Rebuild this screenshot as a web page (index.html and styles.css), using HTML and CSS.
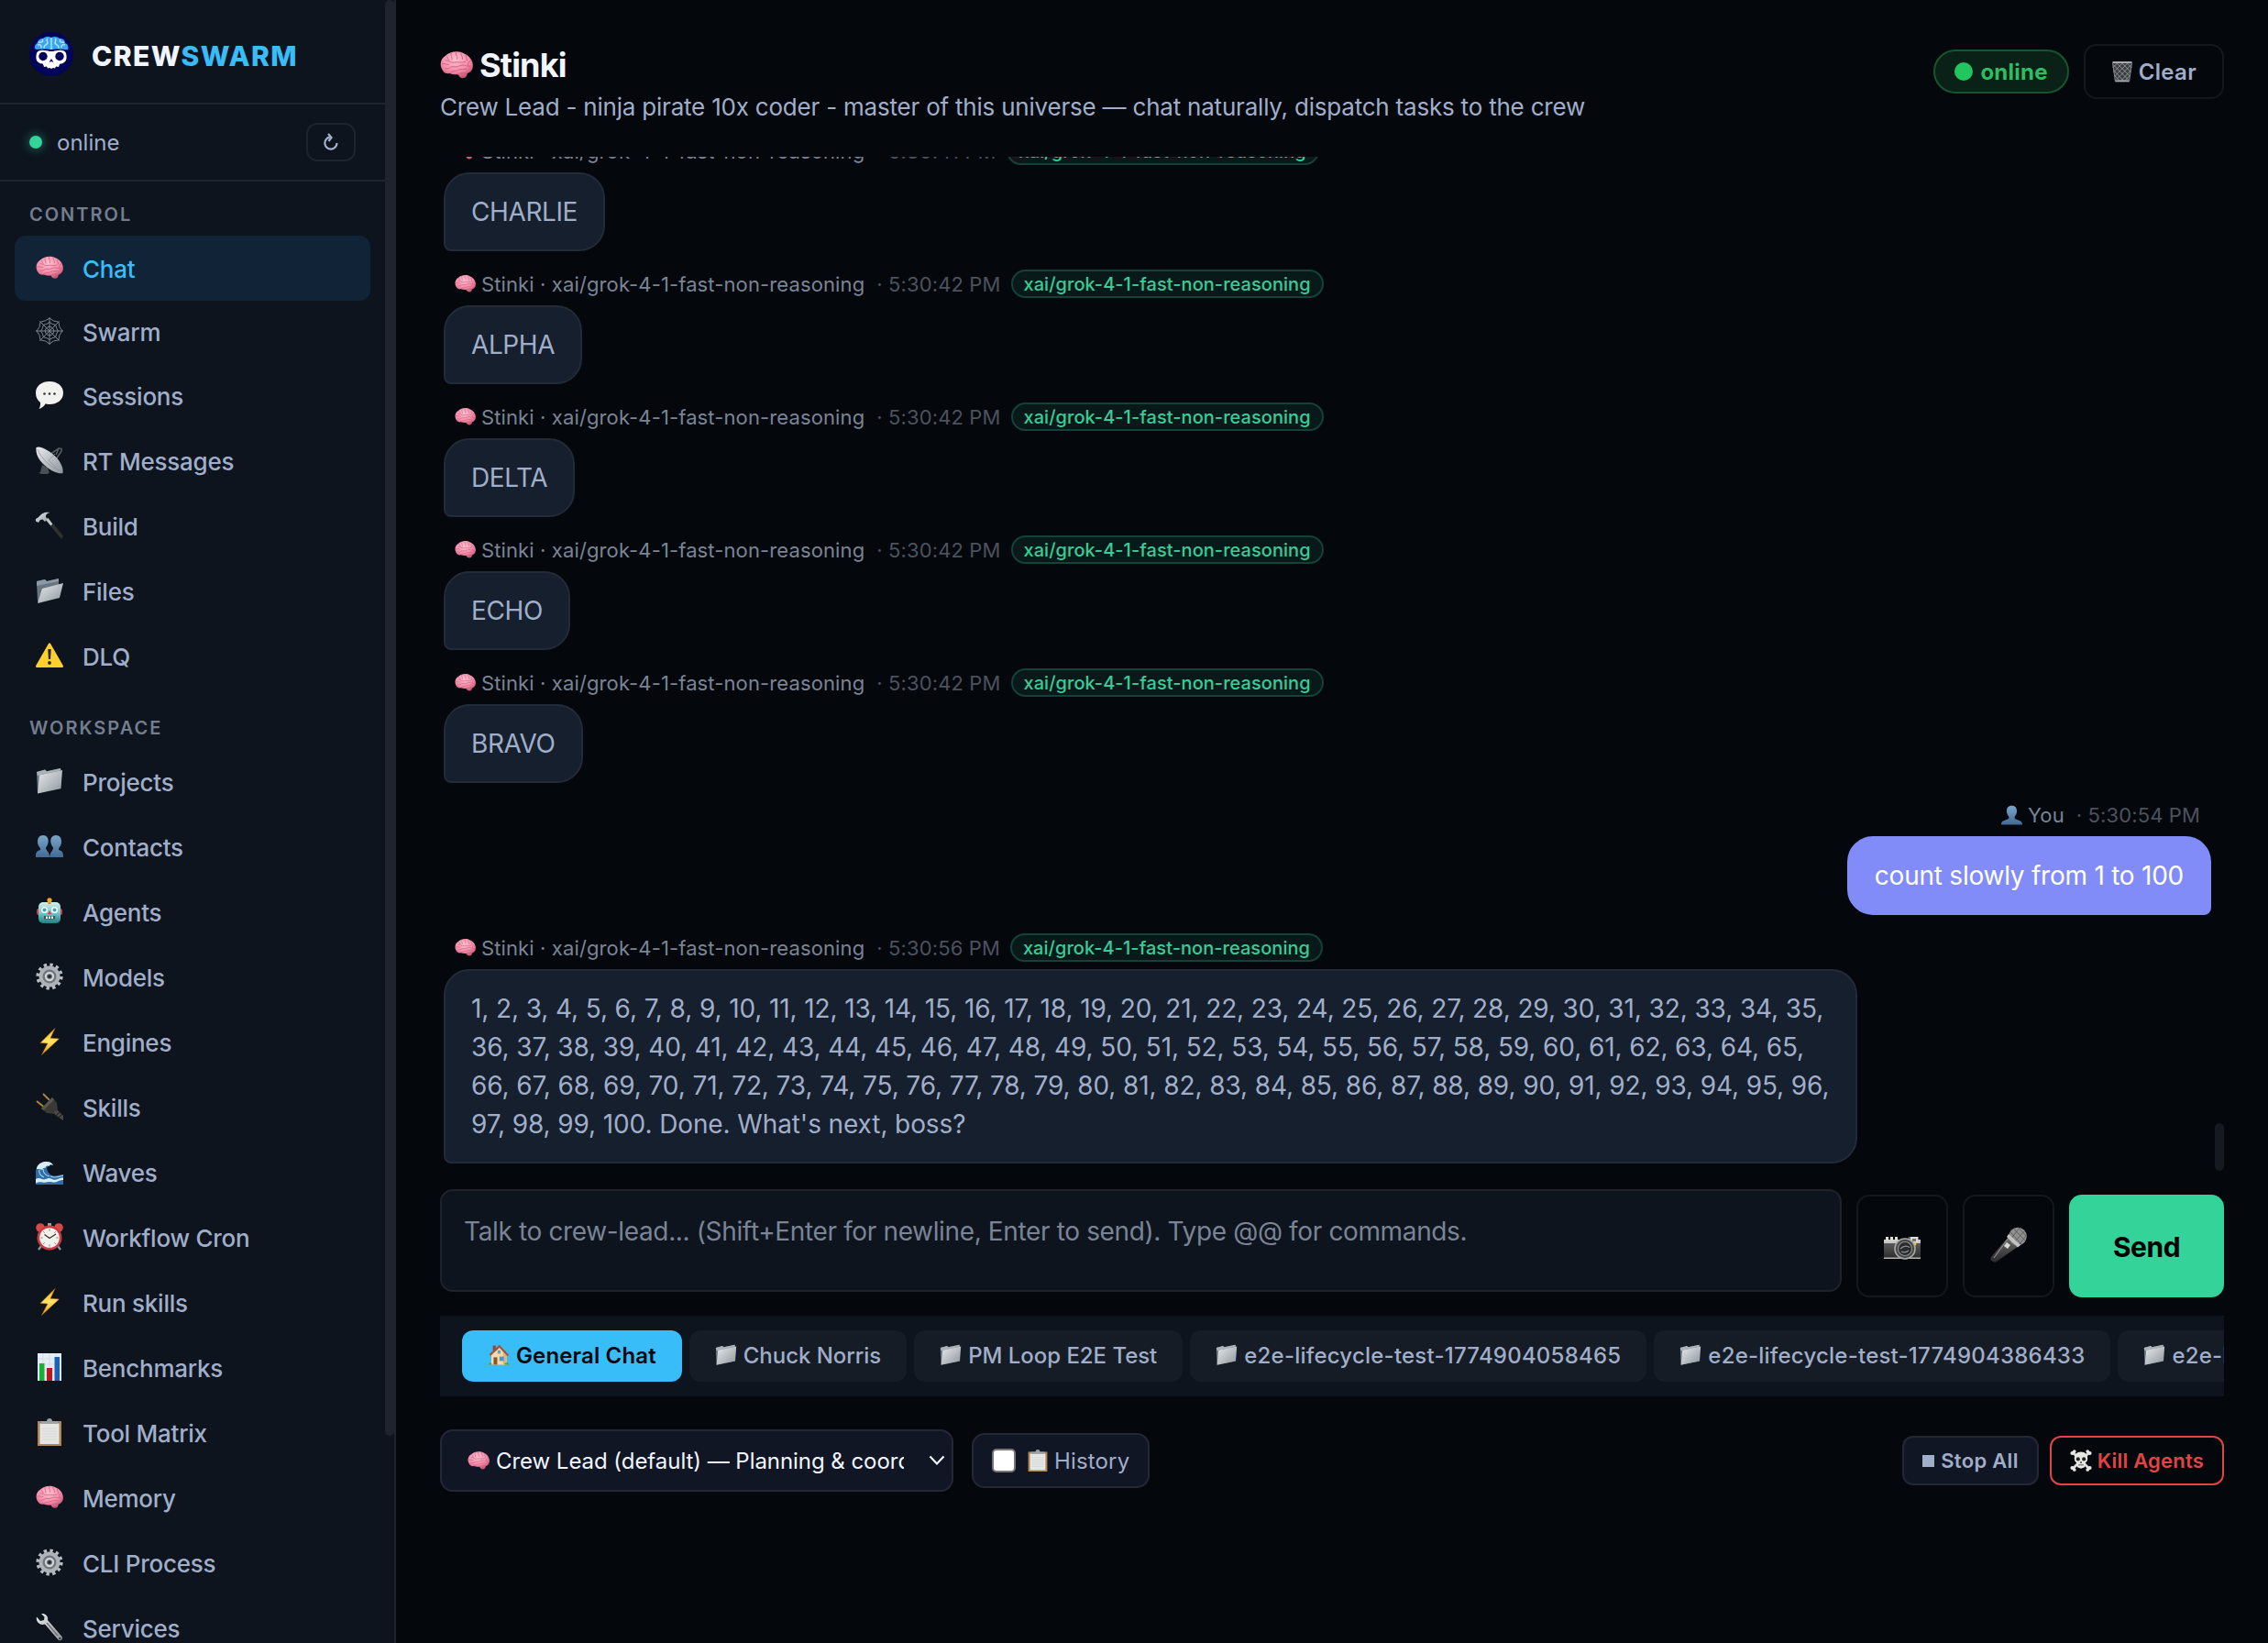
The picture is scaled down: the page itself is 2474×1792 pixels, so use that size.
FILE: index.html
```html
<!DOCTYPE html>
<html lang="en">
<head>
    <meta charset="UTF-8">
    <meta name="viewport" content="width=device-width, initial-scale=1.0">
    <title>crewswarm</title>
    <link rel="stylesheet" href="styles.css">
</head>
<body>
    <!-- icon sprite -->
    <svg class="sprite" width="0" height="0" aria-hidden="true">
        <defs>
            <radialGradient id="gPink" cx=".45" cy=".3" r=".75"><stop offset="0" stop-color="#ffc0d0"/><stop offset=".6" stop-color="#f58aa8"/><stop offset="1" stop-color="#b84a66"/></radialGradient>
            <linearGradient id="gSilver" x1="0" y1="0" x2="1" y2="1"><stop offset="0" stop-color="#e8ebee"/><stop offset="1" stop-color="#8d959c"/></linearGradient>
            <linearGradient id="gBlue" x1="0" y1="0" x2="0" y2="1"><stop offset="0" stop-color="#7ba6ca"/><stop offset="1" stop-color="#426a94"/></linearGradient>
            <linearGradient id="gBolt" x1="0" y1="0" x2="0" y2="1"><stop offset="0" stop-color="#ffb515"/><stop offset=".5" stop-color="#ffe36b"/><stop offset="1" stop-color="#f09a05"/></linearGradient>
            <linearGradient id="gRobot" x1="0" y1="0" x2="0" y2="1"><stop offset="0" stop-color="#d3f1ef"/><stop offset=".5" stop-color="#7cc5c8"/><stop offset="1" stop-color="#1f8189"/></linearGradient>
            <linearGradient id="gDark" x1="0" y1="0" x2="0" y2="1"><stop offset="0" stop-color="#6d6d6d"/><stop offset="1" stop-color="#2a2a2a"/></linearGradient>

            <symbol id="brain" viewBox="0 0 30 30">
                <path d="M2.500 20C-1 15 .5 9 5 6.500 9 2.500 17 1.500 22 4.500c5 2 8.500 7 7.800 12-.3 4-3 5.500-5.300 6.200.4 2-1 4-3.200 4.100-2.500.3-4.300-1.300-4.600-3.300-3.200.4-6-.1-8-.9-2.600.6-5-.5-6.200-2.600z" fill="url(#gPink)"/>
                <path d="M2 14c3-1 4 1 6 .5M6 7c1.500 1 1 3 2.500 4M10 4.500c-1 2 1.500 3 1 5.500M14.500 3.500c-1 2.500 2 3.500 1 6M19 4c-.5 2 2 3 1.500 5.500M23.500 6c-.5 2 1.500 3 1 5M28 11c-2 .5-3 2-2.500 4M5 18c3 1.500 4.500-2.500 8-1.500 3.500.8 5-2 8.500-1.500 2 .2 3.500 1.500 6 1M9 22c2-2.500 5-1 7.500-2.500 2.500-1.200 5-.5 7.500-1M16.500 23.500c2-1.500 5-1.500 8-1M5 10.500c3 0 4 3 8 2 3-.8 6 1 10-.5" fill="none" stroke="#c25f7d" stroke-width=".7" stroke-linecap="round"/>
            </symbol>
            <symbol id="web" viewBox="0 0 30 30">
                <g fill="none" stroke="#7c848d" stroke-width="1">
                    <path d="M15 0v30M0 15h30M4.400 4.400l21.200 21.200M25.600 4.400L4.400 25.600"/>
                    <path d="M15 1q-4 3.500-9.900 4.100Q5 11 1 15q4 4 4.100 9.900Q11 25 15 29q4-4 9.900-4.100Q25 19 29 15q-4-4-4.100-9.900Q19 5 15 1z"/>
                    <path d="M15 5.500q-3 2.500-6.700 2.800Q8 12 5.500 15 8 18 8.300 21.700 12 22 15 24.500q3-2.500 6.700-2.800Q22 18 24.500 15 22 12 21.700 8.300 18 8 15 5.500zM15 10l-3.500 1.500L10 15l1.500 3.500L15 20l3.500-1.500L20 15l-1.500-3.500z"/>
                </g>
            </symbol>
            <symbol id="speech" viewBox="0 0 30 30">
                <path d="M15 0c8.300 0 15 4.800 15 12.500S23.300 25 15 25c-2 0-3-.1-4.500-.4C9 27.500 6 29.500 3.500 30c1-1.500 1.800-4.500 1.500-7C2 20.500 0 17.500 0 12.500 0 4.800 6.700 0 15 0z" fill="#f1f1ef"/>
                <circle cx="9.500" cy="13.500" r="1.300" fill="#333"/><circle cx="15" cy="13.500" r="1.300" fill="#333"/><circle cx="20.500" cy="13.500" r="1.300" fill="#333"/>
            </symbol>
            <symbol id="dish" viewBox="0 0 30 30">
                <path d="M5 28l2-8 6 3 2 6c-3 1.500-8 1.500-12 0z" fill="#4a5055"/>
                <path d="M15 9l10-7 3 .5L28 5l-6 9M25 2l-3 7" fill="none" stroke="#565b5f" stroke-width="1.600"/>
                <path d="M.5 1c-1 8 4 16 11 21 7 6 14 8 18 7 1-6-3-14-10-20C12 3 5-1 .5 1z" fill="url(#gSilver)"/>
                <path d="M14 15l7-7M14 15l8 8M2 3c4 10 14 20 26 24" fill="none" stroke="#8a9299" stroke-width=".7"/>
            </symbol>
            <symbol id="hammer" viewBox="0 0 30 30">
                <path d="M11 9l2.500-2 6 8-2 2z" fill="#c3c8cc"/><path d="M16 15.500l3-2.500L30 26.500 28 30z" fill="#2e3032"/>
                <path d="M0 8l2.500-1.500L6 3c3-2.300 6-2.500 9.500-2C12 2 10.500 3.500 11 6l2 2-3 3-2.500-2.500-2.500.5-2 3L0 10.500z" fill="url(#gSilver)"/>
            </symbol>
            <symbol id="openfolder" viewBox="0 0 30 30">
                <path d="M1 5l9-2 2 2 13-3v17L2 27z" fill="#68757e"/><path d="M1 5l9-2 2 2 13-3v3L1 10z" fill="#8c9aa4"/>
                <path d="M7 13l23-6-4 16L2 29z" fill="url(#gSilver)"/>
            </symbol>
            <symbol id="folder" viewBox="0 0 30 30">
                <path d="M1 5l9-2.500 2 1.700L27 1v22L2 28z" fill="#6f7a82"/><path d="M1 5l9-2.500 2 1.700L27 1l.5 2L2 9z" fill="#aab3b9"/>
                <path d="M4 8.500L29 3l-1.500 20L2 28.500z" fill="url(#gSilver)"/>
            </symbol>
            <symbol id="warn" viewBox="0 0 30 30">
                <path d="M15 1.500c.8 0 1.200.6 1.500 1.200l13.200 23c.6 1.200.1 2.300-1.200 2.300H1.500c-1.300 0-1.800-1.100-1.200-2.300l13.200-23c.3-.6.700-1.200 1.500-1.200z" fill="#fdd02c"/>
                <path d="M13.300 8h3.400l-.6 11h-2.200z" fill="#2b2620"/><circle cx="15" cy="23" r="1.900" fill="#2b2620"/>
            </symbol>
            <symbol id="people" viewBox="0 0 30 30">
                <path d="M8 3c4 0 6 3 5.700 7-.3 3-1.500 5-2.700 6.500 0 3.500 4 4 4 10.500H0c0-5 .5-6.500 5-8 0-1 0-1.800-.5-2.500C3 15 2 13 2 10 2 6 4 3 8 3z" fill="url(#gBlue)"/>
                <path d="M22 3c-4 0-6 3-5.700 7 .3 3 1.500 5 2.700 6.500 0 3.500-3 4-4 10.500h15c0-5-.5-6.500-5-8 0-1 0-1.800.5-2.500C27 15 28 13 28 10c0-4-2-7-6-7z" fill="url(#gBlue)"/>
            </symbol>
            <symbol id="person" viewBox="0 0 30 30">
                <path d="M15 1c5 0 7.500 3.500 7.200 8.500-.2 3.500-1.700 5.500-3.200 7.500 0 2 .3 2.700 1.500 3.200C26 22 30 22.500 30 28H0c0-5.500 4-6 9.500-7.800 1.200-.5 1.500-1.200 1.500-3.200-1.500-2-3-4-3.200-7.500C7.500 4.500 10 1 15 1z" fill="url(#gBlue)"/>
            </symbol>
            <symbol id="robot" viewBox="0 0 30 30">
                <rect x="1" y="12" width="28" height="7" rx="2" fill="#c1444a"/><rect x="3" y="5" width="24" height="23" rx="5" fill="url(#gRobot)"/>
                <path d="M13.500 4h3v3h-3z" fill="#c98317"/><circle cx="15" cy="2.800" r="2.600" fill="#f2a62b"/>
                <circle cx="9.500" cy="13.500" r="3.600" fill="#fff"/><circle cx="20.500" cy="13.500" r="3.600" fill="#fff"/>
                <circle cx="9.500" cy="13.500" r="2" fill="#35a7bd"/><circle cx="20.500" cy="13.500" r="2" fill="#35a7bd"/>
                <path d="M15 14l2 4h-4z" fill="#d6403d"/><path d="M9 20h12v3.500H9z" fill="#31565a"/><path d="M11 20.500h2v2.500h-2zM14 20.500h2v2.500h-2zM17 20.500h2v2.500h-2z" fill="#fff"/>
            </symbol>
            <symbol id="gear" viewBox="0 0 30 30">
                <circle cx="15" cy="15" r="12.800" fill="none" stroke="#b9bdc2" stroke-width="3.600" stroke-dasharray="3.350 3.350"/>
                <circle cx="15" cy="15" r="9.500" fill="#70757a" stroke="#aeb3b8" stroke-width="4"/>
                <circle cx="15" cy="15" r="4" fill="#51565b" stroke="#cfd3d7" stroke-width="2.400"/><circle cx="15" cy="15" r="1.600" fill="#1b2027"/>
            </symbol>
            <symbol id="bolt" viewBox="0 0 30 30"><path d="M21 .5L5 16.500l8 .5L6.500 29.500 25.500 12l-9.500-.8z" fill="url(#gBolt)" stroke="#b46f06" stroke-width=".5"/></symbol>
            <symbol id="plug" viewBox="0 0 30 30">
                <path d="M1 9l7.500 6M8 1l7 7" stroke="#b08a3a" stroke-width="1.800"/>
                <path d="M6 17L18 5l5 6 1 9-3 3-9-1z" fill="#3b3936"/><path d="M6 17L18 5l2 2.500L8.500 19z" fill="#5a5751"/>
                <path d="M20 20l4-1 6 6v5l-3-2-6-4z" fill="#4a4846"/><path d="M22 25l4-4M25 27l4-4" stroke="#171717"/>
            </symbol>
            <symbol id="wave" viewBox="0 0 30 30">
                <path d="M0 14C1 8 6 4 12 4c3 0 6 1.500 7 4-2-1-4-.5-4.500 1-2 0-3 2-2 4 1 4 5 7 9 6.500 4-.5 6-1.500 8.500-1.500v11H0z" fill="#2d6ea6"/>
                <path d="M1 11c1-4 5-7 11-7 3 0 6 1.500 7 4-2-1.300-4-.5-4.500 1-2-1-4 0-4 2-2-.5-3 .5-3 2-2-.8-4-.8-6.500-1zM0 23c5-3 7 2 11 0s5-1 8 .5 6-2 11-2v2.500c-5 0-7 3-11 2.500s-5-1-8 0-6-2-11 1z" fill="#d9edf5"/>
                <path d="M4 13c-1 4 2 7 5 8M8 12c0 4 3 7 7 8M16 20c4 2 9 1 14-1" fill="none" stroke="#a9d4ea" stroke-width="1.100"/>
            </symbol>
            <symbol id="clock" viewBox="0 0 30 30">
                <path d="M6 25l-3 4M24 25l3 4" stroke="#8e969c" stroke-width="2.200"/><circle cx="5" cy="5" r="4.800" fill="#d6484a"/><circle cx="25" cy="5" r="4.800" fill="#d6484a"/><path d="M13 0h4v4h-4z" fill="#9aa1a6"/>
                <circle cx="15" cy="16" r="13.500" fill="#c93d3f"/><circle cx="15" cy="16" r="10.800" fill="#f4f1ec"/>
                <path d="M15 6.500v2M15 23.500v2M5.500 16h2M22.500 16h2M8.300 9.300l1.300 1.300M21.700 9.300l-1.300 1.300M8.300 22.700l1.300-1.300M21.700 22.700l-1.300-1.300" stroke="#777"/><path d="M9.500 12.500l5.500 4 7-4.500" fill="none" stroke="#333" stroke-width="1.300"/>
            </symbol>
            <symbol id="chart" viewBox="0 0 30 30">
                <path d="M2 0h26v30H2z" fill="#e3edf3"/><path d="M2 6h26M2 12h26M2 18h26M2 24h26M8 0v30M15 0v30M22 0v30" stroke="#c3d3df" stroke-width=".5"/>
                <path d="M4 11h5.500v19H4z" fill="#15b03a"/><path d="M12 16h6v14h-6z" fill="#c3161c"/><path d="M20.500 4H26v26h-5.500z" fill="#1a61b8"/>
            </symbol>
            <symbol id="clip" viewBox="0 0 30 30">
                <path d="M2 3h26v27H2z" fill="#ad8754"/><path d="M4.500 5.500h21V28h-21z" fill="#e6e6e6"/><path d="M7 11h16M7 14h16M7 17h16M7 20h16M7 23h16" stroke="#d2d2d2" stroke-width=".8"/>
                <path d="M6 3h6c0-4 6-4 6 0h6v3H6z" fill="#9ea3a7"/>
            </symbol>
            <symbol id="wrench" viewBox="0 0 30 30">
                <path d="M1 3.500L5 8l4-1 .5-3.500L6 0c4-.8 8 2.500 7 7l15.500 18c1.500 3-1.500 5.500-4 3.500L10 11.500C5 13.500-.5 9 1 3.500z" fill="url(#gSilver)"/><path d="M12 10l12 14" stroke="#716f70" stroke-width="1.400"/><circle cx="26.300" cy="27" r="1.200" fill="#3b3331"/>
            </symbol>
            <symbol id="house" viewBox="0 0 30 30">
                <path d="M5 13L16 3l10 11v14H5z" fill="#f4dba8"/><path d="M16 3l10 11v14h-5V9z" fill="#dcb67c"/>
                <path d="M7 2h4v7H7z" fill="#8e4b36"/><path d="M2 14L16 1l13 14-2 1.500L16 5 4 16z" fill="#a8503a"/>
                <path d="M8 18h5v10H8z" fill="#8c5431"/><path d="M16 17h6v6h-6z" fill="#4d94c9"/><path d="M13.500 8.500h4V13h-4z" fill="#5aa2d2"/><path d="M1 28c0-3 4-4 5 0zM23 28c0-4 6-4 6 0z" fill="#5da345"/>
            </symbol>
            <symbol id="trash" viewBox="0 0 30 30">
                <path d="M1 2h28l-4 27H5z" fill="#3b3f43"/>
                <path d="M3 6l20 20M8 4l17 17M15 4l12 12M22 4l6 6M27 6L7 26M22 4L5 21M15 4L3 16M8 4L2 10M3 13l14 15M27 13L13 28M4 20l9 9M26 20l-9 9" stroke="#a6abb0" stroke-width=".9"/>
                <path d="M2 2.500h26M5.500 28h19" stroke="#a4a9ad" stroke-width="2.200"/><path d="M2 3l3.500 25M28 3l-3.500 25" stroke="#8b9095"/>
            </symbol>
            <symbol id="camera" viewBox="0 0 40 40">
                <path d="M0 10h26l1-4h11v5h2v19H0z" fill="url(#gDark)"/><path d="M0 9h40v4H0z" fill="#c9c9c6"/><path d="M2 6h3v4H2zM7 6h3v4H7zM12 6h3v4h-3zM29 6h8v6h-8z" fill="#deded9"/><path d="M31 8h4v3h-4z" fill="#777"/>
                <path d="M0 28.500h40V30H0z" fill="#b4b4b1"/><circle cx="23" cy="19" r="11" fill="#494949" stroke="#a8a8a6" stroke-width="1.600"/><circle cx="23" cy="19" r="7.500" fill="#292b2c" stroke="#8d8d8b" stroke-width="1.200"/><path d="M18 19q5-5 10-1.500M19 22q4 2 8-1" fill="none" stroke="#8d9294" stroke-width="1.300"/><circle cx="34" cy="14" r="1.400" fill="#e8bd3c"/>
            </symbol>
            <symbol id="mic" viewBox="0 0 40 40">
                <path d="M21 10l10 11L7 38c-3 2-8-1-6-5z" fill="url(#gDark)"/><path d="M20.500 11.500L4 34" stroke="#8b8b8b" stroke-width="1.200"/>
                <circle cx="30" cy="10.500" r="9.800" fill="#8f8f8f"/><path d="M22 6l12 13M26 2.500L38 15M31 1l8 9M22 14l10-13M25 18L38 4M31 20l8-10" stroke="#555" stroke-width=".8"/>
                <path d="M20 8l13 12-3 2.500L18 11z" fill="#c2c2c2"/><path d="M18 17l4 3-3 4-4-3z" fill="#d9d9d9"/>
            </symbol>
            <symbol id="skull" viewBox="0 0 30 30">
                <path d="M4 4l22 22M26 4L4 26" stroke="#dcdcda" stroke-width="3.500" stroke-linecap="round"/><g fill="#e7e7e4"><circle cx="3" cy="5" r="2.500"/><circle cx="6" cy="2.500" r="2.300"/><circle cx="27" cy="5" r="2.500"/><circle cx="24" cy="2.500" r="2.300"/><circle cx="3" cy="25" r="2.500"/><circle cx="6" cy="27.500" r="2.300"/><circle cx="27" cy="25" r="2.500"/><circle cx="24" cy="27.500" r="2.300"/>
                <path d="M15 3c6 0 9 4 9 9 0 3-1 5-3 6l-1 6-5 2-5-2-1-6c-2-1-3-3-3-6 0-5 3-9 9-9z"/></g>
                <circle cx="11" cy="13" r="2.600" fill="#222"/><circle cx="19" cy="13" r="2.600" fill="#222"/><path d="M15 15.500l1.500 3h-3zM11.500 20.500h7v1h-7z" fill="#222"/>
            </symbol>
        </defs>
    </svg>

    <div class="app">
        <aside class="sidebar">
            <div class="brand">
                <svg class="logo" viewBox="0 0 48 48">
                    <circle cx="24" cy="24" r="24" fill="#02055a"/>
                    <path d="M6 18c-1-4 2-5 3-7 1-4 5-4 6-4 3-3 7-2 9-1 3-2 7-1 9 1 3 0 6 1 6 5 3 1 4 4 3 7-3 1-5-1-7 0-5-1-8 0-11 0s-7-1-11 0c-3-1-5 1-7-1z" fill="#3ba5f4"/>
                    <path d="M24 6v13M20 7c-3 2 2 3-1 6s-3 1-3 5M28 7c3 2-2 3 1 6s3 1 3 5M14 8c2 2-1 4-4 3M34 8c-2 2 1 4 4 3M9 14c3-1 4 0 4 3M39 14c-3-1-4 0-4 3" fill="none" stroke="#b9e8ff" stroke-width="1.400"/>
                    <path d="M8 23c1-3 5-3.500 8-3 3-.5 5 1 8 1s5-1.500 8-1c3-.5 7 0 8 3 1 4 1 8-2 10-2 2-4 1-5 2l-1 3-3-.5-1 2-2-.5-2 1-2-1-2 .5-1-2-3 .5-1-3c-1-1-3 0-5-2-3-2-3-6-2-10z" fill="#fff"/>
                    <circle cx="15" cy="26.500" r="4.700" fill="#02055a"/><circle cx="33" cy="26.500" r="4.700" fill="#02055a"/><path d="M24 29l2.500 4-2.500-1-2.500 1z" fill="#02055a"/>
                </svg>
                <div class="brand-name">CREW<span>SWARM</span></div>
            </div>
            <div class="status-row">
                <span class="status-dot"></span>
                <span class="status-text">online</span>
                <button class="refresh">
                    <svg viewBox="0 0 18 20"><path d="M7.500 4.600a6.600 6.600 0 1 0 8 6.500M6 1l3.500 4L6.500 9" fill="none" stroke="#a3b1cc" stroke-width="2.200"/></svg>
                </button>
            </div>
            <nav class="nav">
                <div class="nav-label">CONTROL</div>
                <a class="nav-item active"><svg><use href="#brain"/></svg>Chat</a>
                <a class="nav-item short"><svg><use href="#web"/></svg>Swarm</a>
                <a class="nav-item"><svg><use href="#speech"/></svg>Sessions</a>
                <a class="nav-item"><svg><use href="#dish"/></svg>RT Messages</a>
                <a class="nav-item"><svg><use href="#hammer"/></svg>Build</a>
                <a class="nav-item"><svg><use href="#openfolder"/></svg>Files</a>
                <a class="nav-item"><svg><use href="#warn"/></svg>DLQ</a>
                <div class="nav-label workspace">WORKSPACE</div>
                <a class="nav-item"><svg><use href="#folder"/></svg>Projects</a>
                <a class="nav-item"><svg><use href="#people"/></svg>Contacts</a>
                <a class="nav-item"><svg><use href="#robot"/></svg>Agents</a>
                <a class="nav-item"><svg><use href="#gear"/></svg>Models</a>
                <a class="nav-item"><svg><use href="#bolt"/></svg>Engines</a>
                <a class="nav-item"><svg><use href="#plug"/></svg>Skills</a>
                <a class="nav-item"><svg><use href="#wave"/></svg>Waves</a>
                <a class="nav-item"><svg><use href="#clock"/></svg>Workflow Cron</a>
                <a class="nav-item"><svg><use href="#bolt"/></svg>Run skills</a>
                <a class="nav-item"><svg><use href="#chart"/></svg>Benchmarks</a>
                <a class="nav-item"><svg><use href="#clip"/></svg>Tool Matrix</a>
                <a class="nav-item"><svg><use href="#brain"/></svg>Memory</a>
                <a class="nav-item"><svg><use href="#gear"/></svg>CLI Process</a>
                <a class="nav-item"><svg><use href="#wrench"/></svg>Services</a>
            </nav>
            <div class="sidebar-thumb"></div>
        </aside>

        <main class="main">
            <header class="page-header">
                <div>
                    <h1 class="title"><svg><use href="#brain"/></svg>Stinki</h1>
                    <p class="subtitle">Crew Lead - ninja pirate 10x coder - master of this universe — chat naturally, dispatch tasks to the crew</p>
                </div>
                <div class="header-actions">
                    <span class="badge"><i></i>online</span>
                    <button class="clear-btn"><svg><use href="#trash"/></svg>Clear</button>
                </div>
            </header>

            <section class="messages">
                <div class="msg">
                    <div class="meta"><svg><use href="#brain"/></svg><span class="who">Stinki · xai/grok-4-1-fast-non-reasoning</span><span class="time">· 5:30:41 PM</span><span class="chip">xai/grok-4-1-fast-non-reasoning</span></div>
                    <div class="bubble">CHARLIE</div>
                </div>
                <div class="msg">
                    <div class="meta"><svg><use href="#brain"/></svg><span class="who">Stinki · xai/grok-4-1-fast-non-reasoning</span><span class="time">· 5:30:42 PM</span><span class="chip">xai/grok-4-1-fast-non-reasoning</span></div>
                    <div class="bubble">ALPHA</div>
                </div>
                <div class="msg">
                    <div class="meta"><svg><use href="#brain"/></svg><span class="who">Stinki · xai/grok-4-1-fast-non-reasoning</span><span class="time">· 5:30:42 PM</span><span class="chip">xai/grok-4-1-fast-non-reasoning</span></div>
                    <div class="bubble">DELTA</div>
                </div>
                <div class="msg">
                    <div class="meta"><svg><use href="#brain"/></svg><span class="who">Stinki · xai/grok-4-1-fast-non-reasoning</span><span class="time">· 5:30:42 PM</span><span class="chip">xai/grok-4-1-fast-non-reasoning</span></div>
                    <div class="bubble">ECHO</div>
                </div>
                <div class="msg">
                    <div class="meta"><svg><use href="#brain"/></svg><span class="who">Stinki · xai/grok-4-1-fast-non-reasoning</span><span class="time">· 5:30:42 PM</span><span class="chip">xai/grok-4-1-fast-non-reasoning</span></div>
                    <div class="bubble">BRAVO</div>
                </div>
                <div class="msg user">
                    <div class="meta"><svg><use href="#person"/></svg><span class="who">You</span><span class="time">· 5:30:54 PM</span></div>
                    <div class="bubble">count slowly from 1 to 100</div>
                </div>
                <div class="msg">
                    <div class="meta"><svg><use href="#brain"/></svg><span class="who">Stinki · xai/grok-4-1-fast-non-reasoning</span><span class="time">· 5:30:56 PM</span><span class="chip">xai/grok-4-1-fast-non-reasoning</span></div>
                    <div class="bubble long">1, 2, 3, 4, 5, 6, 7, 8, 9, 10, 11, 12, 13, 14, 15, 16, 17, 18, 19, 20, 21, 22, 23, 24, 25, 26, 27, 28, 29, 30, 31, 32, 33, 34, 35,<br>36, 37, 38, 39, 40, 41, 42, 43, 44, 45, 46, 47, 48, 49, 50, 51, 52, 53, 54, 55, 56, 57, 58, 59, 60, 61, 62, 63, 64, 65,<br>66, 67, 68, 69, 70, 71, 72, 73, 74, 75, 76, 77, 78, 79, 80, 81, 82, 83, 84, 85, 86, 87, 88, 89, 90, 91, 92, 93, 94, 95, 96,<br>97, 98, 99, 100. Done. What's next, boss?</div>
                </div>
                <div class="messages-thumb"></div>
            </section>

            <div class="composer">
                <textarea class="input" placeholder="Talk to crew-lead... (Shift+Enter for newline, Enter to send). Type @@ for commands."></textarea>
                <button class="icon-btn"><svg><use href="#camera"/></svg></button>
                <button class="icon-btn mic"><svg><use href="#mic"/></svg></button>
                <button class="send">Send</button>
            </div>

            <div class="tabs">
                <button class="tab active"><svg><use href="#house"/></svg>General Chat</button>
                <button class="tab"><svg><use href="#folder"/></svg>Chuck Norris</button>
                <button class="tab"><svg><use href="#folder"/></svg>PM Loop E2E Test</button>
                <button class="tab e2e"><svg><use href="#folder"/></svg>e2e-lifecycle-test-1774904058465</button>
                <button class="tab e2e"><svg><use href="#folder"/></svg>e2e-lifecycle-test-1774904386433</button>
                <button class="tab e2e"><svg><use href="#folder"/></svg>e2e-lifecycle-test</button>
            </div>

            <div class="toolbar">
                <div class="select">
                    <svg class="select-icon"><use href="#brain"/></svg>
                    <span class="select-text">Crew Lead (default) — Planning &amp; coordination</span>
                    <svg class="chevron" viewBox="0 0 18 12"><path d="M1.500 1.500L9 9.500l7.500-8" fill="none" stroke="#f1f5f9" stroke-width="2.200"/></svg>
                </div>
                <label class="history"><span class="checkbox"></span><svg><use href="#clip"/></svg>History</label>
                <div class="spacer"></div>
                <button class="stop"><i></i>Stop All</button>
                <button class="kill"><svg><use href="#skull"/></svg>Kill Agents</button>
            </div>
        </main>
    </div>
</body>
</html>
```
FILE: styles.css
```css
* {
    box-sizing: border-box;
}
body {
    margin: 0;
    background: #04080d;
    color: #a0aec9;
    font-family: Inter, "Liberation Sans", sans-serif;
    font-size: 26px;
}
button {
    font-family: inherit;
    margin: 0;
    padding: 0;
    background: none;
}
svg {
    display: block;
    flex: none;
}
.sprite {
    position: absolute;
}
.app {
    display: flex;
    height: 1792px;
    overflow: hidden;
}

/* sidebar */
.sidebar {
    position: relative;
    flex: none;
    width: 432px;
    background: #0d141e;
    border-right: 2px solid #1e232d;
}
.sidebar-thumb {
    position: absolute;
    top: 0;
    right: 0;
    width: 10px;
    height: 1566px;
    border-radius: 5px;
    background: #1e232d;
}
.brand {
    display: flex;
    align-items: center;
    gap: 20px;
    width: 420px;
    height: 114px;
    padding: 6px 32px 0;
    border-bottom: 2px solid #1e232d;
}
.logo {
    width: 48px;
    height: 48px;
}
.brand-name {
    padding-top: 3px;
    color: #f1f5ff;
    font-size: 30px;
    font-weight: 800;
    letter-spacing: 1.4px;
}
.brand-name span {
    color: #38bdf8;
}
.status-row {
    display: flex;
    align-items: center;
    width: 420px;
    height: 84px;
    padding: 0 32px;
    border-bottom: 2px solid #1e232d;
}
.status-dot {
    width: 14px;
    height: 14px;
    border-radius: 50%;
    background: #34d399;
    box-shadow: 0 0 12px rgba(52, 211, 153, 0.6);
}
.status-text {
    flex: 1;
    margin-left: 16px;
    font-size: 24px;
}
.refresh {
    display: flex;
    align-items: center;
    justify-content: center;
    width: 54px;
    height: 42px;
    border: 2px solid #1e232d;
    border-radius: 12px;
}
.refresh svg {
    width: 18px;
    height: 20px;
}
.nav {
    width: 420px;
    height: 1594px;
    padding: 0 16px;
    overflow: hidden;
}
.nav-label {
    padding: 24px 16px 11px;
    color: #737d8e;
    font-size: 20px;
    font-weight: 600;
    line-height: 24px;
    letter-spacing: 2px;
}
.nav-label.workspace {
    padding-top: 31px;
}
.nav-item {
    display: flex;
    align-items: center;
    gap: 21px;
    height: 71px;
    padding-left: 23px;
    padding-top: 1px;
    border-radius: 12px;
    font-weight: 500;
    letter-spacing: -0.25px;
}
.nav-item.short {
    height: 68px;
}
.nav-item.active {
    background: #112336;
    color: #38bdf8;
}
.nav-item svg {
    width: 30px;
    height: 30px;
    margin-top: -3px;
}

/* chat page */
.main {
    display: flex;
    flex-direction: column;
    flex: 1;
    min-width: 0;
    padding: 48px 48px 165px;
}
.page-header {
    display: flex;
    justify-content: space-between;
    align-items: flex-start;
    height: 123px;
}
.title {
    display: flex;
    align-items: center;
    gap: 7px;
    margin: 0;
    color: #f1f5ff;
    font-size: 36px;
    font-weight: 700;
    line-height: 46px;
    letter-spacing: -0.8px;
}
.title svg {
    width: 36px;
    height: 36px;
}
.subtitle {
    margin: 2px 0 0;
    line-height: 42px;
    letter-spacing: -0.21px;
}
.header-actions {
    display: flex;
    align-items: center;
    gap: 16px;
}
.badge {
    display: flex;
    align-items: center;
    gap: 8px;
    height: 48px;
    padding: 0 21px;
    border: 2px solid #17552f;
    border-radius: 24px;
    background: #092117;
    color: #2fbd62;
    font-size: 24px;
    font-weight: 700;
    letter-spacing: 0.25px;
}
.badge i {
    width: 20px;
    height: 20px;
    border-radius: 50%;
    background: #22c55e;
}
.clear-btn {
    display: flex;
    align-items: center;
    gap: 6px;
    height: 60px;
    padding: 0 28px;
    border: 2px solid #14181e;
    border-radius: 14px;
    color: #a0aec9;
    font-size: 24px;
    font-weight: 600;
    letter-spacing: 0.3px;
}
.clear-btn svg {
    width: 24px;
    height: 26px;
}
.messages {
    position: relative;
    display: flex;
    flex-direction: column;
    justify-content: flex-end;
    gap: 20px;
    height: 1110px;
    padding: 0 14px 12px 4px;
    overflow: hidden;
}
.messages-thumb {
    position: absolute;
    right: 0;
    bottom: 4px;
    width: 10px;
    height: 52px;
    border-radius: 5px;
    background: #151920;
}
.msg {
    display: flex;
    flex-direction: column;
    align-items: flex-start;
}
.msg.user {
    align-items: flex-end;
}
.meta {
    display: flex;
    align-items: center;
    height: 31px;
    margin-bottom: 8px;
    padding: 0 12px;
    color: #7a8495;
    font-size: 22px;
    letter-spacing: 0.12px;
    white-space: nowrap;
}
.msg.user .meta {
    height: 30px;
}
.meta svg {
    width: 23px;
    height: 23px;
    margin-right: 6px;
}
.time {
    margin-left: 13px;
    color: #4c525d;
}
.chip {
    height: 31px;
    margin-left: 11px;
    padding: 0 12px;
    border: 2px solid #14423a;
    border-radius: 16px;
    background: #08191a;
    color: #3acb98;
    font-size: 20px;
    font-weight: 500;
    line-height: 28px;
    letter-spacing: 0.05px;
}
.bubble {
    padding: 20px 28px;
    border: 2px solid #232b38;
    border-radius: 28px 28px 28px 8px;
    background: #161f2d;
    font-size: 28px;
    line-height: 42px;
    letter-spacing: -0.4px;
    white-space: nowrap;
}
.bubble.long {
    width: 1542px;
    letter-spacing: -0.11px;
}
.msg.user .bubble {
    border-color: #818cf8;
    border-radius: 28px 28px 8px 28px;
    background: #818cf8;
    color: #fff;
    letter-spacing: -0.24px;
}

/* composer */
.composer {
    display: flex;
    align-items: flex-end;
    gap: 16px;
    height: 118px;
    margin-top: 16px;
}
.input {
    flex: 1;
    align-self: flex-start;
    height: 112px;
    padding: 23px 24px;
    border: 2px solid #1e232b;
    border-radius: 14px;
    background: #0d141e;
    font: 28px/42px Inter, sans-serif;
    letter-spacing: -0.36px;
    resize: none;
}
.input::placeholder {
    color: #7a8495;
}
.icon-btn {
    display: flex;
    align-items: center;
    justify-content: center;
    width: 100px;
    height: 112px;
    border: 2px solid #14181e;
    border-radius: 14px;
}
.icon-btn svg {
    width: 40px;
    height: 40px;
    margin-top: 7px;
}
.icon-btn.mic svg {
    margin-top: -3px;
}
.send {
    width: 169px;
    height: 112px;
    padding-top: 2px;
    border: 0;
    border-radius: 14px;
    background: #34d399;
    color: #000;
    font-size: 30px;
    font-weight: 700;
    letter-spacing: -0.5px;
}

/* project tabs */
.tabs {
    display: flex;
    gap: 8px;
    height: 88px;
    margin-top: 20px;
    padding: 16px 24px;
    background: #0d141e;
    overflow: hidden;
}
.tab {
    display: flex;
    flex: none;
    align-items: center;
    gap: 7px;
    height: 56px;
    padding: 0 28px 2px;
    border: 0;
    border-radius: 12px;
    background: #161c25;
    color: #a0aec9;
    font-size: 24px;
    font-weight: 500;
    letter-spacing: -0.04px;
}
.tab.active {
    background: #38bdf8;
    color: #04080d;
    font-weight: 600;
    letter-spacing: 0.14px;
}
.tab.e2e {
    letter-spacing: 0.22px;
}
.tab svg {
    width: 24px;
    height: 24px;
}

/* toolbar */
.toolbar {
    display: flex;
    align-items: center;
    height: 68px;
    margin-top: 36px;
}
.select {
    display: flex;
    align-items: center;
    width: 560px;
    height: 68px;
    padding: 0 7px 0 28px;
    border: 2px solid #232834;
    border-radius: 14px;
    background: #111625;
    color: #f1f5ff;
    font-size: 24px;
    letter-spacing: -0.05px;
}
.select-icon {
    width: 24px;
    height: 24px;
}
.select-text {
    width: 445px;
    margin-left: 7px;
    overflow: hidden;
    white-space: nowrap;
}
.chevron {
    width: 18px;
    height: 12px;
    margin-left: auto;
}
.history {
    display: flex;
    align-items: center;
    width: 194px;
    height: 60px;
    margin-left: 20px;
    padding-left: 20px;
    border: 2px solid #232834;
    border-radius: 14px;
    background: #111625;
    font-size: 24px;
    letter-spacing: 0.15px;
}
.checkbox {
    width: 26px;
    height: 26px;
    border: 2px solid #767676;
    border-radius: 5px;
    background: #fff;
}
.history svg {
    width: 24px;
    height: 24px;
    margin: 0 6px 0 12px;
}
.spacer {
    flex: 1;
}
.stop,
.kill {
    display: flex;
    align-items: center;
    height: 54px;
    padding: 0 20px;
    border: 2px solid #232834;
    border-radius: 12px;
    background: #111625;
    color: #a0aec9;
    font-size: 22px;
    font-weight: 600;
    letter-spacing: 0.3px;
}
.stop i {
    width: 13px;
    height: 13px;
    margin-right: 7px;
    background: #a0aec9;
}
.kill {
    margin-left: 12px;
    border-color: #e04545;
    background: none;
    color: #e04545;
    letter-spacing: 0.2px;
}
.kill svg {
    width: 24px;
    height: 24px;
    margin-right: 6px;
}
```
